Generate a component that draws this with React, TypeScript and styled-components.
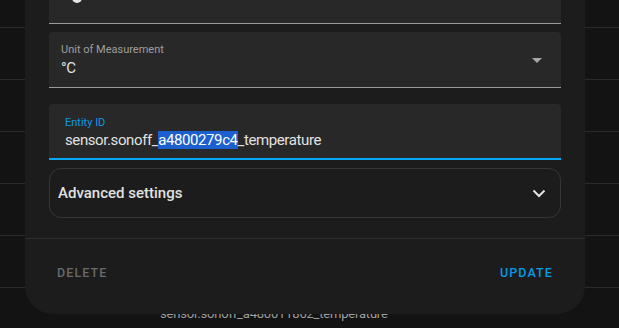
import * as React from 'react';
import styled, { createGlobalStyle } from 'styled-components';

const GlobalStyle = createGlobalStyle`
    html, body {
        margin: 0;
        padding: 0;
        background: #131313;
        overflow: hidden;
    }
    body {
        font-family: Roboto, 'Noto Sans', sans-serif;
        -webkit-font-smoothing: antialiased;
    }
`;

const Page = styled.div`
    position: relative;
    width: 619px;
    height: 328px;
    overflow: hidden;
    background: #131313;
`;

const List = styled.div`
    display: flex;
    flex-direction: column;
    margin-top: -24px;
`;

const ListRow = styled.div`
    height: 51px;
    border-bottom: 1px solid #2a2a2a;
    display: flex;
    align-items: center;
    padding-left: 160px;
    color: #9e9e9e;
    font-size: 13px;
    letter-spacing: -0.2px;
    line-height: 20px;
`;

const Dialog = styled.div`
    position: absolute;
    left: 25px;
    top: -40px;
    width: 560px;
    height: 354px;
    background: #1c1c1c;
    border-radius: 0 0 28px 28px;
    display: flex;
    flex-direction: column;
`;

const Content = styled.div`
    padding: 0 24px;
    display: flex;
    flex-direction: column;
`;

const Field = styled.div<{ $focused?: boolean; $gap: number }>`
    position: relative;
    box-sizing: border-box;
    margin-top: ${p => p.$gap}px;
    height: 56px;
    background: #282828;
    border-radius: 4px 4px 0 0;
    border-bottom: ${p => (p.$focused ? '2px solid #03a9f4' : '1px solid #9a9a9a')};
    padding: ${p => (p.$focused ? '12px 16px 0' : '11px 12px 0')};
    display: flex;
    flex-direction: column;
`;

const TopField = styled(Field)`
    padding: 0 0 0 23px;
`;

const Dot = styled.span`
    width: 10px;
    height: 10px;
    margin-top: 25px;
    border-radius: 50%;
    background: #e6e6e6;
`;

const Label = styled.div<{ $focused?: boolean }>`
    font-size: 11px;
    line-height: 14px;
    color: ${p => (p.$focused ? '#039be5' : '#9e9e9e')};
`;

const Value = styled.div<{ $tight?: boolean }>`
    font-size: 15px;
    letter-spacing: -0.4px;
    line-height: 20px;
    margin-top: ${p => (p.$tight ? 0 : 1)}px;
    color: #e1e1e1;
    white-space: nowrap;
`;

const Selected = styled.span`
    background: #1c5fcf;
    color: #ffffff;
`;

const Arrow = styled.svg`
    position: absolute;
    right: 19px;
    top: 26px;
`;

const Expander = styled.div`
    box-sizing: border-box;
    margin-top: 8px;
    height: 50px;
    border: 1px solid #363636;
    border-radius: 12px;
    display: flex;
    align-items: center;
    justify-content: space-between;
    padding: 0 14px 0 8px;
`;

const ExpanderTitle = styled.span`
    font-size: 15px;
    font-weight: 500;
    color: #e1e1e1;
`;

const Divider = styled.div`
    margin-top: 20px;
    height: 1px;
    background: #2f2f2f;
`;

const Actions = styled.div`
    display: flex;
    justify-content: space-between;
    align-items: center;
    padding: 15px 24px;
`;

const Button = styled.button<{ $primary?: boolean }>`
    height: 36px;
    padding: 0 8px;
    background: none;
    border: none;
    font-family: Roboto, sans-serif;
    font-size: 12.5px;
    font-weight: 500;
    letter-spacing: 1.1px;
    color: ${p => (p.$primary ? '#039be5' : '#6a6a6a')};
`;

export default function App() {
    return (
        <Page>
            <GlobalStyle />
            <List>
                {[0, 1, 2, 3, 4, 5, 6].map(i => (
                    <ListRow key={i}>
                        {i === 6 ? 'sensor.sonoff_a480011862_temperature' : ''}
                    </ListRow>
                ))}
            </List>
            <Dialog>
                <Content>
                    <TopField $gap={8}>
                        <Dot />
                    </TopField>
                    <Field $gap={8}>
                        <Label>Unit of Measurement</Label>
                        <Value>°C</Value>
                        <Arrow width="10" height="5" viewBox="0 0 10 5">
                            <path d="M0 0 L10 0 L5 5 Z" fill="#a8a8a8" />
                        </Arrow>
                    </Field>
                    <Field $gap={16} $focused>
                        <Label $focused>Entity ID</Label>
                        <Value $tight>
                            sensor.sonoff_<Selected>a4800279c4</Selected>_temperature
                        </Value>
                    </Field>
                    <Expander>
                        <ExpanderTitle>Advanced settings</ExpanderTitle>
                        <svg width="14" height="9" viewBox="0 0 14 9">
                            <path d="M1.5 1.5 L7 7 L12.5 1.5" stroke="#e1e1e1" strokeWidth="2" fill="none" />
                        </svg>
                    </Expander>
                </Content>
                <Divider />
                <Actions>
                    <Button>DELETE</Button>
                    <Button $primary>UPDATE</Button>
                </Actions>
            </Dialog>
        </Page>
    );
}
